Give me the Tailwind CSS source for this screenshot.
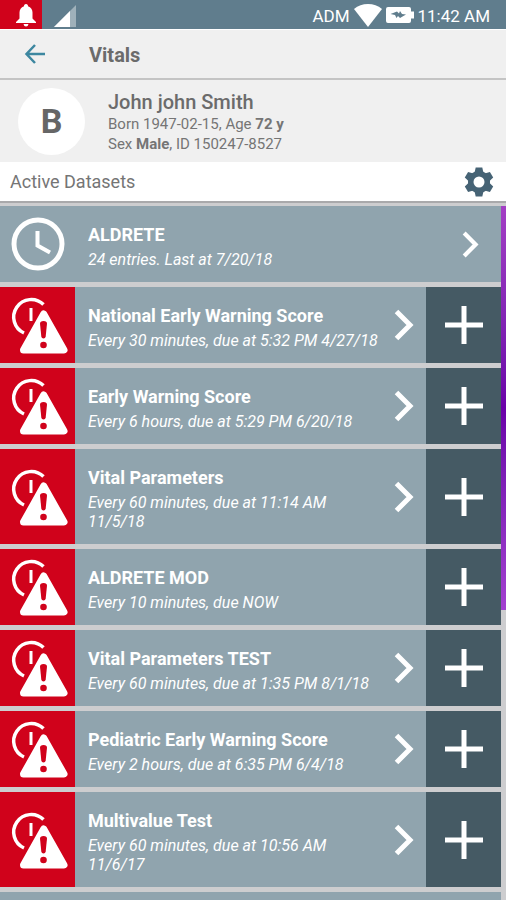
<!DOCTYPE html>
<html lang="en">
<head>
  <meta charset="UTF-8">
  <meta name="viewport" content="width=device-width, initial-scale=1.0">
  <title>Vitals</title>
  <script src="https://cdn.jsdelivr.net/npm/@tailwindcss/browser@4"></script>
</head>
<body class="min-h-screen flex flex-col bg-[#f0f0f0] font-['Roboto',sans-serif]">

  <!-- Shared icons -->
  <svg class="hidden">
    <symbol id="icon-alert" viewBox="0 0 75 76">
      <path d="M43.500 17.600A17.500 17.500 0 1 0 24 46" fill="none" stroke="#fff" stroke-width="3.500"/>
      <path d="M43.700 26 L64.500 63.500 H23 Z" fill="#d0021b" stroke="#d0021b" stroke-width="9" stroke-linejoin="round"/>
      <path d="M31 21v13" stroke="#fff" stroke-width="3"/>
      <path d="M43.700 27 L64 63 H23.500 Z" fill="#fff" stroke="#fff" stroke-width="7" stroke-linejoin="round"/>
      <path d="M40 36.500q0-2.500 3.500-2.500t3.500 2.500l-1.300 13q-.3 2-2.200 2t-2.200-2z" fill="#d0021b"/>
      <circle cx="43.500" cy="58" r="3.300" fill="#d0021b"/>
    </symbol>
    <symbol id="icon-chevron" viewBox="0 0 20 32">
      <path d="M2.500 2.500L16 16L2.500 29.500" fill="none" stroke="#fff" stroke-width="5"/>
    </symbol>
    <symbol id="icon-plus" viewBox="0 0 38 38">
      <path d="M19 0v38M0 19h38" stroke="#fff" stroke-width="5"/>
    </symbol>
  </svg>

  <!-- Status bar -->
  <div class="h-[29px] shrink-0 flex items-center justify-between bg-[#607d8d] text-white">
    <div class="h-full flex items-center">
      <div class="w-[42px] h-full pl-4 flex items-center bg-[#d0021b]">
        <svg class="w-5 h-6" viewBox="0 0 20 24" fill="#fff">
          <path d="M10 1c1.500 0 2 1 2 2.200 3 1 4.500 3.300 4.500 6.300v6l3.500 3.500v1H0v-1l3.500-3.500v-6C3.500 6.500 5 4.200 8 3.200 8 2 8.500 1 10 1z"/>
          <path d="M7.500 21h5q-.5 2.500-2.500 2.500T7.500 21z"/>
        </svg>
      </div>
      <svg class="w-6 h-6 ml-3" viewBox="0 0 24 24">
        <path d="M22 2v22H0z" fill="#fff" opacity=".4"/>
        <path d="M16 8v16H0z" fill="#fff"/>
      </svg>
    </div>
    <div class="flex items-center gap-1 pr-4 text-[17px] leading-6">
      <span class="pt-0.5">ADM</span>
      <svg class="w-7 h-6" viewBox="0 0 28 24"><path d="M14 24L0 6Q6 1 14 1t14 5z" fill="#fff"/></svg>
      <svg class="w-7 h-4" viewBox="0 0 28 16">
        <path d="M2 0h21a2 2 0 0 1 2 2v2.500h3v7h-3V14a2 2 0 0 1-2 2H2a2 2 0 0 1-2-2V2a2 2 0 0 1 2-2z" fill="#fff"/>
        <path d="M4.500 7L11 4.500l2 2 1-2.500 2 3 4 .5L14 11l-2-2-1.500 2-1.500-3z" fill="#607d8d"/>
      </svg>
      <span class="pt-0.5">11:42 AM</span>
    </div>
  </div>

  <!-- App bar -->
  <header class="h-[51px] shrink-0 flex items-center pl-6 border-t border-white border-b-2 border-b-[#c4c4c4]">
    <button type="button" aria-label="Back" class="w-[22px]">
      <svg class="w-[22px] h-5" viewBox="0 0 22 20" fill="none" stroke="#3d87a0" stroke-width="2.500">
        <path d="M21 10H3M11 1L2.500 10L11 19"/>
      </svg>
    </button>
    <h1 class="ml-[43px] pt-0.5 text-[20px] leading-6 font-bold text-[#6b6b6b]">Vitals</h1>
  </header>

  <!-- Patient -->
  <section class="shrink-0 flex items-center pl-[18px] h-[82px] text-[#757575]">
    <div class="size-[67px] rounded-full bg-white flex items-center justify-center text-[34px] font-bold text-[#666]">B</div>
    <div class="ml-[23px] pt-0.5 text-[15px] leading-5">
      <h2 class="text-[20px] leading-6 font-medium text-[#6b6b6b]">John john Smith</h2>
      <p>Born 1947-02-15, Age <strong>72 y</strong></p>
      <p>Sex <strong>Male</strong>, ID 150247-8527</p>
    </div>
  </section>

  <div class="h-[39px] shrink-0 flex items-center justify-between pl-[10px] pr-3 bg-white">
    <h3 class="text-[18px] leading-6 text-[#757575]">Active Datasets</h3>
    <button type="button" aria-label="Settings">
      <svg class="size-[30px]" viewBox="0 0 30 30">
        <g fill="#466375">
          <circle cx="15" cy="15" r="11"/>
          <path id="tooth" d="M10.500 6l1.200-5.500h6.600L19.500 6z"/>
          <use href="#tooth" transform="rotate(60 15 15)"/>
          <use href="#tooth" transform="rotate(120 15 15)"/>
          <use href="#tooth" transform="rotate(180 15 15)"/>
          <use href="#tooth" transform="rotate(240 15 15)"/>
          <use href="#tooth" transform="rotate(300 15 15)"/>
        </g>
        <circle cx="15" cy="15" r="5.500" fill="#fff"/>
      </svg>
    </button>
  </div>

  <!-- Datasets -->
  <main class="flex-1 flex border-t-2 border-[#a9a9ab] bg-[#cdcdcf] pt-[3px]">
    <ul id="datasets" class="flex-1 min-w-0 flex flex-col gap-[5px] text-white">
      <li class="shrink-0 bg-[#90a4ae]">
        <a href="#" class="flex items-center">
          <svg class="w-[75px] h-[76px]" viewBox="0 0 75 76" fill="none" stroke="#fff">
            <circle cx="38" cy="38" r="24" stroke-width="5"/>
            <path d="M37.500 25v14.500L50 46.500" stroke-width="4"/>
          </svg>
          <div class="flex-1 pl-[13px] pt-[17px] pb-[13px]">
            <div class="text-[18px] leading-6 font-bold">ALDRETE</div>
            <div class="mt-[3px] text-[16px] leading-[19px] italic">24 entries. Last at 7/20/18</div>
          </div>
          <svg class="w-[17px] h-[27px] mr-[22px]"><use href="#icon-chevron"/></svg>
        </a>
      </li>
    </ul>
    <div class="w-[5px] shrink-0">
      <div class="h-[404px] bg-linear-to-b from-[#a33fc4] via-[#6a00a8] to-[#a33fd0]"></div>
    </div>
  </main>

  <script>
    const datasets = [
      { name: 'National Early Warning Score', due: 'Every 30 minutes, due at 5:32 PM 4/27/18', open: true },
      { name: 'Early Warning Score', due: 'Every 6 hours, due at 5:29 PM 6/20/18', open: true },
      { name: 'Vital Parameters', due: 'Every 60 minutes, due at 11:14 AM 11/5/18', open: true },
      { name: 'ALDRETE MOD', due: 'Every 10 minutes, due NOW', open: false },
      { name: 'Vital Parameters TEST', due: 'Every 60 minutes, due at 1:35 PM 8/1/18', open: true },
      { name: 'Pediatric Early Warning Score', due: 'Every 2 hours, due at 6:35 PM 6/4/18', open: true },
      { name: 'Multivalue Test', due: 'Every 60 minutes, due at 10:56 AM 11/6/17', open: true }
    ];
    const list = document.getElementById('datasets');

    datasets.forEach(d => {
      const row = document.createElement('li');
      row.className = 'shrink-0 flex bg-[#90a4ae]';
      row.innerHTML = `
        <div class="w-[75px] shrink-0 flex items-center bg-[#d0021b]">
          <svg class="w-[75px] h-[76px]"><use href="#icon-alert"/></svg>
        </div>
        <a href="#" class="flex-1 min-w-0 flex items-center pl-[13px] pr-3">
          <div class="flex-1 min-w-0 pt-[17px] pb-[13px] pr-3">
            <div class="text-[18px] leading-6 font-bold">${d.name}</div>
            <div class="mt-[3px] text-[16px] leading-[19px] italic">${d.due}</div>
          </div>
          ${d.open ? '<svg class="w-5 h-8 shrink-0"><use href="#icon-chevron"/></svg>' : ''}
        </a>
        <button type="button" aria-label="Add entry to ${d.name}" class="w-[75px] shrink-0 flex items-center justify-center bg-[#455a64]">
          <svg class="size-[38px]"><use href="#icon-plus"/></svg>
        </button>
      `;
      list.appendChild(row);
    });

    // empty row fills what is left of the screen
    const last = document.createElement('li');
    last.className = 'flex-1 bg-[#90a4ae]';
    list.appendChild(last);
  </script>
</body>
</html>
